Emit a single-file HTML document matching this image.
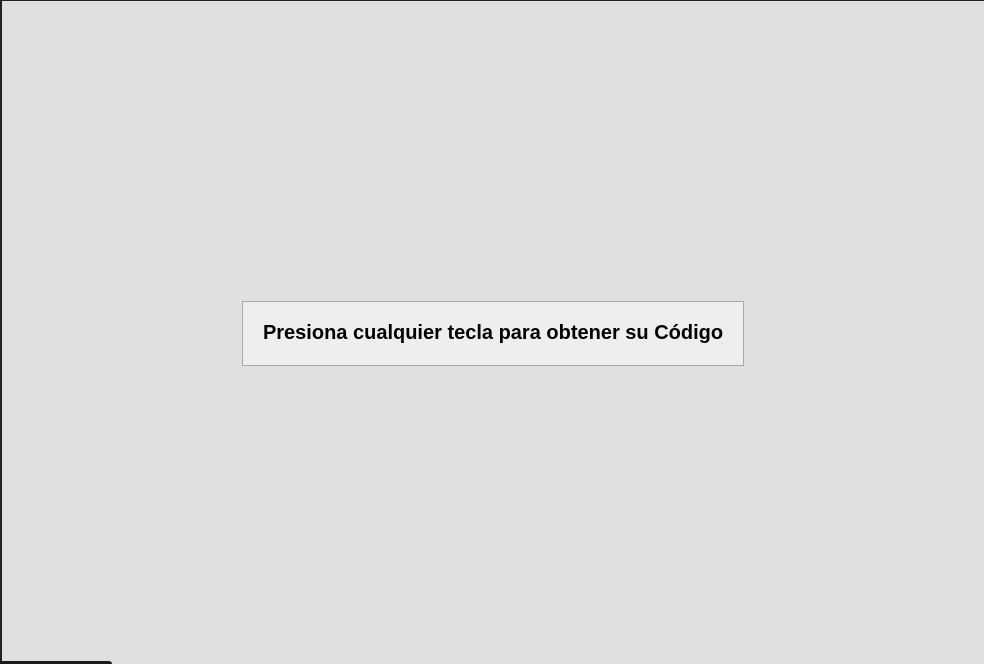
<!DOCTYPE html>
<html><head><style>
html,body{margin:0;padding:0;}
body{width:984px;height:664px;background:#e0e0e0;position:relative;overflow:hidden;font-family:"Liberation Sans",Arial,sans-serif;}
.top{position:absolute;left:0;top:0;width:984px;height:1px;background:#222;}
.left{position:absolute;left:0;top:0;width:2px;height:664px;background:#222;}
.bot{position:absolute;left:0;top:661px;width:112px;height:3px;background:#1a1a1a;border-top-right-radius:3px;}
.btn{position:absolute;left:242px;top:301px;width:500px;height:63px;background:#eeeeee;border:1px solid #a8a8a8;box-sizing:content-box;display:flex;align-items:center;justify-content:center;font-weight:bold;font-size:20px;color:#000;}
</style></head><body>
<div class="top"></div><div class="left"></div><div class="bot"></div>
<div class="btn">Presiona cualquier tecla para obtener su Código</div>
</body></html>
